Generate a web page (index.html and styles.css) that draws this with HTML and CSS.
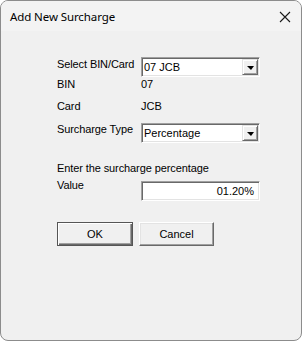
FILE: index.html
```html
<!DOCTYPE html>
<html lang="en">
<head>
  <meta charset="UTF-8">
  <title>Add New Surcharge</title>
  <link rel="stylesheet" href="styles.css">
</head>
<body>

  <div class="window">
    <div class="titlebar">
      <span class="title">Add New Surcharge</span>
      <svg class="close" width="12" height="12" viewBox="0 0 12 12">
        <path d="M1 1 L11 11 M11 1 L1 11" stroke="#1a1a1a" stroke-width="1.1" fill="none"/>
      </svg>
    </div>

    <div class="form">
      <div class="row row-select">
        <label class="lbl lbl-pad">Select BIN/Card</label>
        <div class="combo">
          <span class="combo-text">07 JCB</span>
          <span class="drop"><i class="arrow"></i></span>
        </div>
      </div>

      <div class="row row-bin">
        <span class="lbl">BIN</span>
        <span class="val">07</span>
      </div>

      <div class="row row-card">
        <span class="lbl">Card</span>
        <span class="val">JCB</span>
      </div>

      <div class="row row-type">
        <label class="lbl">Surcharge Type</label>
        <div class="combo">
          <span class="combo-text">Percentage</span>
          <span class="drop"><i class="arrow"></i></span>
        </div>
      </div>

      <div class="row row-hint">
        <span class="lbl wide">Enter the surcharge percentage</span>
      </div>

      <div class="row row-value">
        <label class="lbl">Value</label>
        <div class="textbox">01.20%</div>
      </div>

      <div class="buttons">
        <button class="btn btn-default">OK</button>
        <button class="btn">Cancel</button>
      </div>
    </div>
  </div>

</body>
</html>
```

FILE: styles.css
```css
* {
  margin: 0;
  padding: 0;
  box-sizing: border-box;
}

body {
  background: #ffffff;
  font-family: 'Liberation Sans', Arial, sans-serif;
  font-size: 11px;
  color: #000;
}

.window {
  width: 302px;
  height: 341px;
  border: 1px solid #8c8c8c;
  border-radius: 8px;
  background: #f0f0f0;
  overflow: hidden;
}

.titlebar {
  height: 30px;
  background: #f3f3f3;
  display: flex;
  align-items: center;
  justify-content: space-between;
  padding: 0 10px 0 9px;
}

.title {
  font-family: 'Noto Sans', 'Open Sans', sans-serif;
  font-size: 11.5px;
  letter-spacing: -0.1px;
  color: #000;
  margin-top: 1px;
}

.close {
  margin-top: 1px;
}

.form {
  padding: 26px 0 0 56px;
}

.row {
  display: flex;
  align-items: flex-start;
}

.lbl {
  width: 84px;
  line-height: 13px;
  white-space: nowrap;
  letter-spacing: -0.1px;
}

.lbl.wide {
  width: auto;
}

.lbl-pad {
  padding-top: 1px;
}

.val {
  line-height: 13px;
}

.row-select { height: 21px; }
.row-bin    { height: 22px; }
.row-card   { height: 23px; }
.row-type   { height: 39px; }
.row-hint   { height: 17px; }
.row-value  { height: 43px; }

.combo {
  width: 119px;
  height: 20px;
  background: #fff;
  border-top: 1px solid #a0a0a0;
  border-left: 1px solid #a0a0a0;
  border-right: 1px solid #fff;
  border-bottom: 1px solid #fff;
  box-shadow: inset 1px 1px 0 #696969, inset -1px -1px 0 #e3e3e3;
  display: flex;
  align-items: center;
  justify-content: space-between;
  padding: 1px 1px 1px 2px;
}

.combo-text {
  line-height: 13px;
  margin-top: 1px;
}

.drop {
  width: 16px;
  height: 16px;
  background: #f0f0f0;
  border-top: 1px solid #e3e3e3;
  border-left: 1px solid #e3e3e3;
  border-right: 1px solid #696969;
  border-bottom: 1px solid #696969;
  box-shadow: inset 1px 1px 0 #fff, inset -1px -1px 0 #a0a0a0;
  display: flex;
  align-items: center;
  justify-content: center;
}

.arrow {
  width: 0;
  height: 0;
  border-left: 4px solid transparent;
  border-right: 3px solid transparent;
  border-top: 4px solid #000;
  margin-top: 1px;
}

.textbox {
  width: 119px;
  height: 20px;
  margin-top: 2px;
  background: #fff;
  border-top: 1px solid #a0a0a0;
  border-left: 1px solid #a0a0a0;
  border-right: 1px solid #fff;
  border-bottom: 1px solid #fff;
  box-shadow: inset 1px 1px 0 #696969, inset -1px -1px 0 #e3e3e3;
  text-align: right;
  padding: 3px 5px 0 0;
  line-height: 13px;
}

.buttons {
  display: flex;
  gap: 6px;
}

.btn {
  width: 75px;
  height: 24px;
  font-family: 'Liberation Sans', Arial, sans-serif;
  font-size: 11px;
  color: #000;
  background: #f0f0f0;
  border-top: 1px solid #fff;
  border-left: 1px solid #fff;
  border-right: 1px solid #696969;
  border-bottom: 1px solid #696969;
  box-shadow: inset -1px -1px 0 #a0a0a0, inset 1px 1px 0 #e3e3e3;
}

.btn-default {
  width: 76px;
  border: 1px solid #555;
  box-shadow: inset 1px 1px 0 #fff, inset -1px -1px 0 #696969, inset -2px -2px 0 #a0a0a0;
}
```
